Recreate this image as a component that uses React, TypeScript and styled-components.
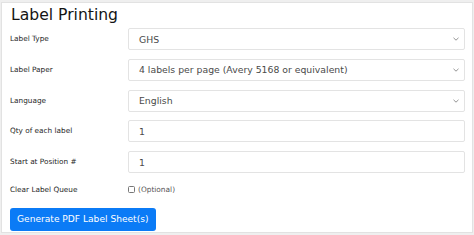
import React from "react";
import styled, { createGlobalStyle } from "styled-components";

const Global = createGlobalStyle`
  html, body { margin: 0; padding: 0; background: #efefef; }
  body { font-family: "DejaVu Sans", Verdana, sans-serif; }
  * { box-sizing: border-box; }
`;

const Card = styled.div`
  margin: 2px 1px 0 1px;
  height: 231px;
  background: #fff;
  border: 1px solid #e2e2e2;
  padding: 2px 7px 0 8px;
`;

const Title = styled.h1`
  margin: 0;
  font-size: 15.6px;
  font-weight: 400;
  line-height: 20px;
  color: #141414;
  padding-left: 1px;
`;

const Form = styled.div`
  display: grid;
  grid-template-columns: 118px 1fr;
  grid-template-rows: repeat(5, 22px) 16px;
  row-gap: 8.75px;
  margin-top: 3px;
  align-items: center;
`;

const Label = styled.label`
  font-size: 7.3px;
  color: #262626;
  line-height: 16px;
`;

const Field = styled.div`
  height: 22px;
  border: 1px solid #e3e3e3;
  border-radius: 2px;
  background: #fff;
  display: flex;
  align-items: center;
  justify-content: space-between;
  padding: 0 5px 0 10px;
  font-size: 9.3px;
  color: #4a4a4a;
`;

const Chevron = styled.svg`
  width: 6px;
  height: 4px;
`;

const CheckRow = styled.div`
  display: flex;
  align-items: center;
  gap: 3px;
  font-size: 7.4px;
  color: #555;
`;

const Box = styled.span`
  width: 7px;
  height: 7px;
  border: 1px solid #777;
  border-radius: 1.5px;
  display: inline-block;
`;

const Button = styled.button`
  margin-top: 10px;
  height: 23px;
  padding: 0 7px;
  border: none;
  border-radius: 3px;
  background: #0b7bf6;
  color: #fff;
  font-family: "DejaVu Sans", Verdana, sans-serif;
  font-size: 9.1px;
  display: block;
`;

const Select = ({ value }: { value: string }) => (
  <Field>
    <span>{value}</span>
    <Chevron viewBox="0 0 6 4">
      <path d="M0.5 0.8 L3 3.2 L5.5 0.8" fill="none" stroke="#888" strokeWidth="0.9" />
    </Chevron>
  </Field>
);

export default function App() {
  return (
    <>
      <Global />
      <Card>
        <Title>Label Printing</Title>
        <Form>
          <Label>Label Type</Label>
          <Select value="GHS" />
          <Label>Label Paper</Label>
          <Select value="4 labels per page (Avery 5168 or equivalent)" />
          <Label>Language</Label>
          <Select value="English" />
          <Label>Qty of each label</Label>
          <Field>1</Field>
          <Label>Start at Position #</Label>
          <Field>1</Field>
          <Label>Clear Label Queue</Label>
          <CheckRow>
            <Box />
            <span>(Optional)</span>
          </CheckRow>
        </Form>
        <Button>Generate PDF Label Sheet(s)</Button>
      </Card>
    </>
  );
}
